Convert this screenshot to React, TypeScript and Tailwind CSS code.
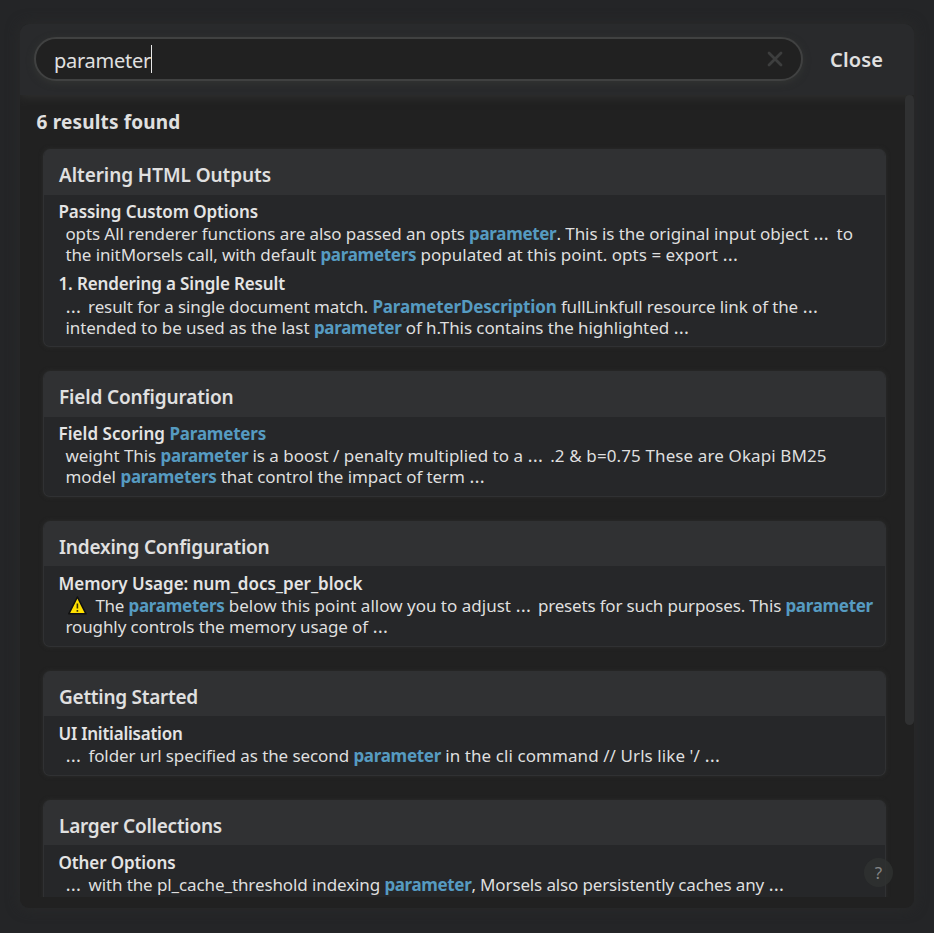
import { useLayoutEffect, useRef, useState } from 'react';
import type { ReactNode } from 'react';

// A run of text: content, width in pixels, and whether it is a highlighted match.
type Run = { text: string; width: number; match?: boolean };
type Line = { runs: Run[]; height: string };
type Section = { heading: Run[]; lines: Line[]; className: string };
type Result = { title: Run; header: string; body: string; sections: Section[] };

const t = (text: string, width: number): Run => ({ text, width });
const m = (text: string, width: number): Run => ({ text, width, match: true });

const results: Result[] = [
  {
    title: t('Altering HTML Outputs', 212),
    header: 'h-[46px] pt-[5px]',
    body: 'pt-[6px] pb-[10px]',
    sections: [
      {
        heading: [t('Passing Custom Options', 199.5)],
        className: '',
        lines: [
          {
            height: 'h-[22px] leading-[24px]',
            runs: [
              t('opts All renderer functions are also passed an opts ', 403.7),
              m('parameter', 87.3),
              t('. This is the original input object ', 256.8),
              t('… ', 23.3),
              t('to', 16.5),
            ],
          },
          {
            height: 'h-[21px] leading-[21px]',
            runs: [
              t('the initMorsels call, with default ', 255),
              m('parameters ', 100),
              t('populated at this point. opts = export ', 302),
              t('…', 18),
            ],
          },
        ],
      },
      {
        heading: [t('1. Rendering a Single Result', 226.5)],
        className: 'mt-[8px]',
        lines: [
          {
            height: 'mt-px h-[22px] leading-[24px]',
            runs: [
              t('… ', 22.7),
              t('result for a single document match. ', 284.3),
              m('ParameterDescription ', 188.5),
              t('fullLinkfull resource link of the ', 241.5),
              t('…', 18),
            ],
          },
          {
            height: 'h-[19px] leading-[17px]',
            runs: [
              t('intended to be used as the last ', 248.5),
              m('parameter ', 91.8),
              t('of h.This contains the highlighted ', 267.7),
              t('…', 18),
            ],
          },
        ],
      },
    ],
  },
  {
    title: t('Field Configuration', 174.5),
    header: 'h-[46px] pt-[5px]',
    body: 'pt-[6px] pb-[9px]',
    sections: [
      {
        heading: [t('Field Scoring ', 111), m('Parameters', 96.5)],
        className: '',
        lines: [
          {
            height: 'h-[22px] leading-[24px]',
            runs: [
              t('weight This ', 95.2),
              m('parameter ', 91.8),
              t('is a boost / penalty multiplied to a ', 275),
              t('… ', 22.8),
              t('.2 & b=0.75 These are Okapi BM25', 276.5),
            ],
          },
          {
            height: 'h-[21px] leading-[21px]',
            runs: [
              t('model ', 55),
              m('parameters ', 100.4),
              t('that control the impact of term ', 248.4),
              t('…', 18),
            ],
          },
        ],
      },
    ],
  },
  {
    title: t('Indexing Configuration', 210.5),
    header: 'h-[45px] pt-[6px]',
    body: 'pt-[7px] pb-[9px]',
    sections: [
      {
        heading: [t('Memory Usage: num_docs_per_block', 304)],
        className: '',
        lines: [
          {
            height: 'h-[22px] leading-[24px]',
            runs: [
              t('⚠', 30),
              t('The ', 33),
              m('parameters ', 100.4),
              t('below this point allow you to adjust ', 286.6),
              t('… ', 22.5),
              t('presets for such purposes. This ', 247.5),
              m('parameter', 87.5),
            ],
          },
          {
            height: 'h-[21px] leading-[21px]',
            runs: [t('roughly controls the memory usage of ', 307), t('…', 18)],
          },
        ],
      },
    ],
  },
  {
    title: t('Getting Started', 139),
    header: 'h-[45px] pt-[6px]',
    body: 'pt-[7px] pb-[9px]',
    sections: [
      {
        heading: [t('UI Initialisation', 124)],
        className: '',
        lines: [
          {
            height: 'h-[22px] leading-[24px]',
            runs: [
              t('… ', 23),
              t('folder url specified as the second ', 265),
              m('parameter ', 91.8),
              t("in the cli command // Urls like '/ ", 259.2),
              t('…', 18),
            ],
          },
        ],
      },
    ],
  },
  {
    title: t('Larger Collections', 163),
    header: 'h-[45px] pt-[6px]',
    body: 'pt-[7px] pb-[9px]',
    sections: [
      {
        heading: [t('Other Options', 117)],
        className: '',
        lines: [
          {
            height: 'h-[22px] leading-[24px]',
            runs: [
              t('… ', 23),
              t('with the pl_cache_threshold indexing ', 296),
              m('parameter', 87),
              t(', Morsels also persistently caches any ', 297),
              t('…', 18),
            ],
          },
        ],
      },
    ],
  },
];

// Spreads its text evenly over the given width.
function Fit({ text, width, className = '' }: { text: string; width: number; className?: string }) {
  const ref = useRef<HTMLSpanElement>(null);
  const [spacing, setSpacing] = useState(0);
  useLayoutEffect(() => {
    const natural = ref.current!.getBoundingClientRect().width;
    setSpacing((width - natural) / text.length);
  }, [text, width]);
  return (
    <span ref={ref} className={`whitespace-pre ${className}`} style={{ letterSpacing: spacing }}>
      {text}
    </span>
  );
}

function WarningIcon() {
  return (
    <span className="h-[20px] w-[30px] shrink-0 self-start pl-[2px] pt-px">
      <svg width="20" height="20" viewBox="0 0 20 20">
        <path d="M10.4 2 19 18.8H1.8Z" fill="#ffe000" stroke="#111111" strokeWidth="1.6" strokeLinejoin="round" />
        <path d="M10.4 8.4v5.2M10.4 15v1.8" stroke="#3b3300" strokeWidth="1.6" />
      </svg>
    </span>
  );
}

function Runs({ runs }: { runs: Run[] }): ReactNode {
  return runs.map((run, i) => {
    if (run.text === '⚠') return <WarningIcon key={i} />;
    if (run.text.startsWith('…'))
      return <Fit key={i} text={run.text} width={run.width} className="font-['Open_Sans'] text-[20px] leading-none" />;
    return (
      <Fit key={i} text={run.text} width={run.width} className={run.match ? 'font-bold text-[#569bc1]' : ''} />
    );
  });
}

function Card({ result }: { result: Result }) {
  return (
    <article className="shrink-0 overflow-hidden rounded-[7px] border border-t-0 border-[#303133] bg-[#262729] shadow-[0_0_4px_#2c2d2c]">
      <header className={`${result.header} flex items-center bg-[#303133] pl-[15.5px] text-[19px] font-semibold leading-[26px] text-[#e0e0e0]`}>
        <Fit text={result.title.text} width={result.title.width} />
      </header>
      <div className={`${result.body} pl-[15px] text-[17px] text-[#dfdfdf]`}>
        {result.sections.map((section, i) => (
          <section key={i} className={section.className}>
            <h3 className="-mb-px flex h-[22px] font-semibold leading-[22px] text-[#e4e4e4]">
              <Runs runs={section.heading} />
            </h3>
            {section.lines.map((line, j) => (
              <p key={j} className={`${line.height} flex items-baseline pl-[6.9px]`}>
                <Runs runs={line.runs} />
              </p>
            ))}
          </section>
        ))}
      </div>
    </article>
  );
}

export default function App() {
  return (
    <div className="h-[933px] w-[934px] overflow-hidden bg-[#242527] px-5 pt-6 font-['Noto_Sans','Open_Sans',sans-serif] text-[#e0e0e0]">
      <main className="relative flex h-[884px] w-[894px] flex-col overflow-hidden rounded-[9px] bg-[#212121] shadow-[0_0_14px_#2a2b2b]">
        <div className="relative z-10 flex h-[71px] shrink-0 bg-[#292a2c] pl-[14px] pt-[13px] shadow-[0_2px_9px_#303130]">
          <div className="flex h-[44px] w-[769px] items-center rounded-full border-2 border-[#404141] bg-[#212121] pl-[18px] pr-[18px] shadow-[0_2px_7px_#333533]">
            <Fit text="parameter" width={97} className="pt-[3px] text-[20px] leading-[28px]" />
            <span className="h-7 w-px bg-[#e8e8e8]" />
            <svg className="ml-auto" width="16" height="16" viewBox="0 0 16 16">
              <path d="M2 2 14 14M14 2 2 14" stroke="#3d3e3e" strokeWidth="2.8" strokeLinecap="round" />
            </svg>
          </div>
          <button className="ml-[27px] h-[44px] pt-px text-[20px] font-semibold leading-[44px]">
            <Fit text="Close" width={53} />
          </button>
        </div>
        <div className="flex h-[802px] flex-none">
          <div className="flex w-[885px] flex-col overflow-hidden">
            <h2 className="flex h-[54px] shrink-0 pl-[16.5px] pt-[14px] text-[19px] font-bold leading-[26px]">
              <Fit text="6 results found" width={144} />
            </h2>
            <div className="flex flex-col gap-6 pl-[22.5px] pr-[19.5px]">
              {results.map((result) => (
                <Card key={result.title.text} result={result} />
              ))}
            </div>
          </div>
          <div className="z-20 h-[630px] w-[9px] rounded-full bg-[#303132]" />
        </div>
        <button className="absolute bottom-[21px] right-[21px] z-20 flex size-[29px] items-center justify-center rounded-full bg-[#303231]/80 text-[17px] text-[#858686]">
          ?
        </button>
      </main>
    </div>
  );
}
